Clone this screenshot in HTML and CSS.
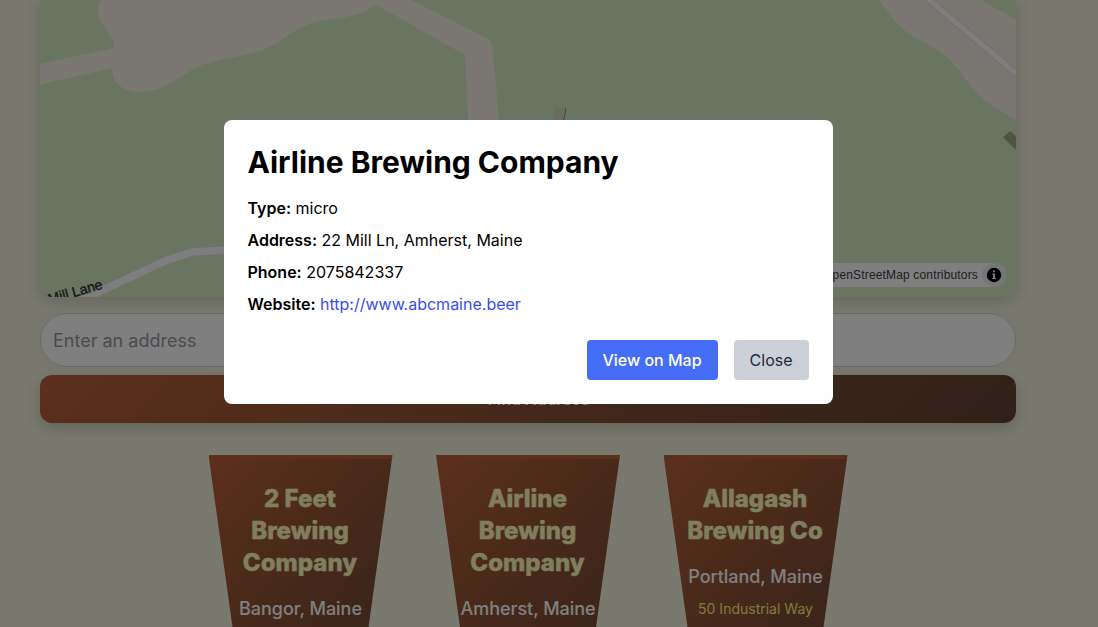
FILE: index.html
```html
<!DOCTYPE html>
<html lang="en">
<head>
<meta charset="utf-8">
<title>Breweries</title>
<link rel="stylesheet" href="styles.css">
</head>
<body>
<main class="page">
  <section class="map">
    <svg class="map-art" width="976" height="297" viewBox="40 0 976 297">
      <g fill="#f5ede2">
        <path d="M101 0C98 5 97 12 99 17C102 26 112 35 114 44L114 48L40 64V84.500L112.500 68C112 84 124 92 141 92C168 91 184 71 206 63.500C226 57 246 57 265 49C281 42 292 30 309 24C325 18 347 20 365 11L376 4.500L465 55L468 120H499L492 44L488 39L411 0Z"/>
        <path d="M879 0C887 10 892 20 904 30C918 41 932 44 948 58C962 71 968 86 982 98C993 107 1004 112 1016 120V20C1004 12 994 8 981 0Z"/>
      </g>
      <path d="M555 106L566 108L564 120H553Z" fill="#d6d9bf"/>
      <path d="M565.500 108L565 115L563.500 120" fill="none" stroke="#8c9278"/>
      <path d="M927 -2L1018 75" stroke="#dcdcdf" stroke-width="7"/>
      <path d="M927 -2L1018 75" stroke="#fcfcff" stroke-width="5.500"/>
      <path d="M1003 137.500L1010 131L1018 138V152Z" fill="#a3a68b"/>
      <path d="M45 317L165 261L192 252L230 250" fill="none" stroke="#dddcd8" stroke-width="9"/>
      <path d="M45 317L165 261L192 252L230 250" fill="none" stroke="#fefdfe" stroke-width="7.500"/>
      <text class="street" transform="translate(49.500 304) rotate(-16)">Mill Lane</text>
    </svg>
    <div class="attribution">
      <span>MapLibre | © OpenStreetMap contributors</span>
      <svg class="info" width="24" height="24" viewBox="0 0 24 24"><circle cx="12" cy="12" r="12" fill="#ececec"/><circle cx="12" cy="12" r="7.200"/><g fill="#ececec"><circle cx="12" cy="8.300" r="1.150"/><path d="M10 10.400H13V15H14V16H10V15H11V11.400H10Z"/></g></svg>
    </div>
  </section>
  <input class="address" type="text" placeholder="Enter an address">
  <button class="find"><i class="find-mark"></i>Find Address</button>
  <section class="glasses">
    <article class="glass"><h2>2 Feet Brewing Company</h2><p class="city">Bangor, Maine</p></article>
    <article class="glass"><h2>Airline Brewing Company</h2><p class="city">Amherst, Maine</p></article>
    <article class="glass"><h2>Allagash Brewing Co</h2><p class="city">Portland, Maine</p><p class="street-line">50 Industrial Way</p></article>
  </section>
</main>
<div class="overlay">
  <div class="modal" role="dialog" aria-modal="true">
    <h1>Airline Brewing Company</h1>
    <p><strong>Type:</strong> micro</p>
    <p><strong>Address:</strong> 22 Mill Ln, Amherst, Maine</p>
    <p><strong>Phone:</strong> 2075842337</p>
    <p><strong>Website:</strong> <a href="#">http://www.abcmaine.beer</a></p>
    <div class="actions"><button class="btn primary">View on Map</button><button class="btn">Close</button></div>
  </div>
</div>
</body>
</html>
```
FILE: styles.css
```css
* { box-sizing: border-box; margin: 0; }
body { height: 627px; overflow: hidden; background: #f2f0dd; font-family: Inter, sans-serif; font-size: 16px; line-height: 24px; }
button, input { font: inherit; border: 0; }
.page { height: 627px; padding: 0 40px; display: flex; flex-direction: column; overflow: hidden; }
.map, .address, .find, .glasses { width: 976px; flex: none; }
.map { position: relative; height: 297px; border-radius: 0 0 12px 12px; background: #d5eac2; box-shadow: 0 4px 16px rgba(0, 0, 0, .16); overflow: hidden; }
.map-art { display: block; }
.street { font: 14px "Liberation Sans", sans-serif; fill: #333; stroke: #333; stroke-width: .4px; }
.attribution { position: absolute; right: 10px; bottom: 10px; height: 24px; display: flex; align-items: center; gap: 4px; padding-left: 8px; border-radius: 12px; background: #fff; color: #404040; font: 12px/20px "Liberation Sans", sans-serif; letter-spacing: .16px; }
.address { height: 54px; margin-top: 16px; padding: 0 12px; border: 1px solid #d1d5db; border-radius: 27px; background: #fff; font-size: 18px; }
.address::placeholder { color: #9298a3; opacity: 1; }
.find { height: 48px; margin-top: 8px; padding-left: 11px; display: flex; align-items: center; justify-content: center; gap: 13px; border-radius: 12px; background: linear-gradient(135deg, #b85f36, #5e4233); box-shadow: 0 5px 14px rgba(0, 0, 0, .17); color: #fff; font-weight: 600; }
.find-mark { width: 3px; height: 16px; background: #666; }
.glasses { display: flex; justify-content: center; gap: 43.500px; margin-top: 32px; }
.glass { width: 184px; height: 264px; flex: none; padding: 24px 20px; border-top: 4px solid #b85f36; background: linear-gradient(135deg, #b85f36, #5e4233); clip-path: polygon(0 0, 100% 0, 80% 100%, 20% 100%); text-align: center; }
.glass h2 { margin: 0 -1px 0 -2px; font-size: 24px; line-height: 32px; font-weight: 800; color: #fefebf; -webkit-text-stroke: .4px #fefebf; }
.city { margin: 16px -10px 0; font-size: 18px; line-height: 28px; font-weight: 500; letter-spacing: -.04px; color: #fff; }
.street-line { margin-top: 8px; font-size: 14px; line-height: 20px; color: #fdf47f; }
.overlay { position: fixed; inset: 0; display: flex; align-items: flex-start; padding: 120px 0 0 224px; background: rgba(0, 0, 0, .5); }
.modal { width: 609px; height: 284px; padding: 24px 24px 24px 23.500px; border-radius: 8px; background: #fff; color: #000; }
.modal h1 { margin-bottom: 16px; font-size: 30px; line-height: 36px; font-weight: 700; }
.modal p { margin-bottom: 8px; }
.modal strong { font-weight: 600; }
.modal a { color: #394fe8; text-decoration: none; }
.actions { display: flex; justify-content: flex-end; gap: 16px; margin-top: 24px; }
.btn { height: 40px; padding: 0 16.500px 0 15.500px; border-radius: 4px; background: #cbcfd8; color: #1f2937; }
.btn.primary { background: #456df6; color: #fff; font-weight: 500; }
```
